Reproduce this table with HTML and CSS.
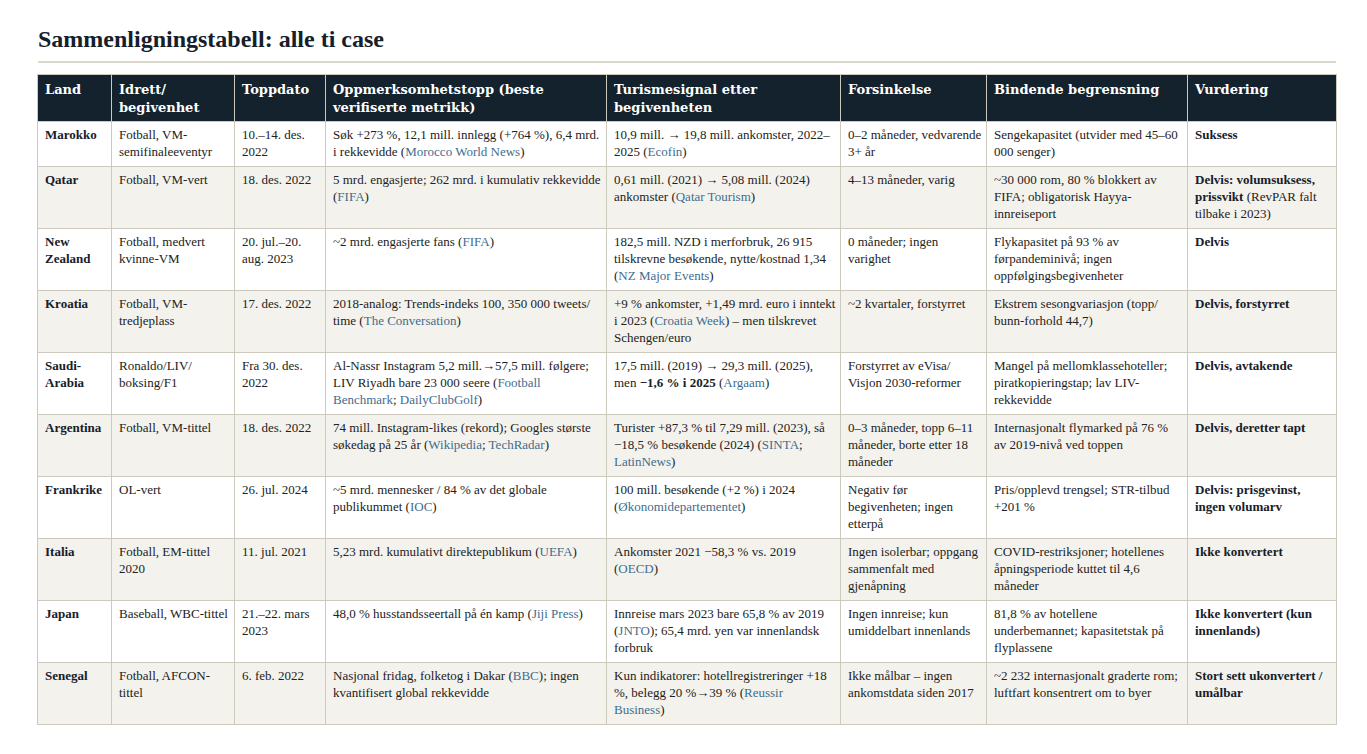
FILE: index.html
```html
<!DOCTYPE html>
<html lang="no">
<head>
<meta charset="utf-8">
<title>Sammenligningstabell</title>
<link rel="stylesheet" href="styles.css">
</head>
<body>
<main class="page">
<h1 class="title">Sammenligningstabell: alle ti case</h1>
<table class="cmp">
<colgroup>
<col class="c1"><col class="c2"><col class="c3"><col class="c4"><col class="c5"><col class="c6"><col class="c7"><col class="c8">
</colgroup>
<thead>
<tr>
<th>Land</th><th>Idrett/ begivenhet</th><th>Toppdato</th><th>Oppmerksomhetstopp (beste verifiserte metrikk)</th><th>Turismesignal etter begivenheten</th><th>Forsinkelse</th><th>Bindende begrensning</th><th>Vurdering</th>
</tr>
</thead>
<tbody>
<tr>
<td class="land">Marokko</td><td>Fotball, VM-semifinaleeventyr</td><td>10.–14. des. 2022</td>
<td>Søk +273 %, 12,1 mill. innlegg (+764 %), 6,4 mrd. i rekkevidde (<a>Morocco World News</a>)</td>
<td>10,9 mill. → 19,8 mill. ankomster, 2022–2025 (<a>Ecofin</a>)</td>
<td>0–2 måneder, vedvarende 3+ år</td>
<td>Sengekapasitet (utvider med 45–60 000 senger)</td>
<td><b>Suksess</b></td>
</tr>
<tr>
<td class="land">Qatar</td><td>Fotball, VM-vert</td><td>18. des. 2022</td>
<td>5 mrd. engasjerte; 262 mrd. i kumulativ rekkevidde (<a>FIFA</a>)</td>
<td>0,61 mill. (2021) → 5,08 mill. (2024) ankomster (<a>Qatar Tourism</a>)</td>
<td>4–13 måneder, varig</td>
<td>~30 000 rom, 80 % blokkert av FIFA; obligatorisk Hayya-innreiseport</td>
<td><b>Delvis: volumsuksess, prissvikt</b> (RevPAR falt tilbake i 2023)</td>
</tr>
<tr>
<td class="land">New Zealand</td><td>Fotball, medvert kvinne-VM</td><td>20. jul.–20. aug. 2023</td>
<td>~2 mrd. engasjerte fans (<a>FIFA</a>)</td>
<td>182,5 mill. NZD i merforbruk, 26 915 tilskrevne besøkende, nytte/kostnad 1,34 (<a>NZ Major Events</a>)</td>
<td>0 måneder; ingen varighet</td>
<td>Flykapasitet på 93 % av førpandeminivå; ingen oppfølgingsbegivenheter</td>
<td><b>Delvis</b></td>
</tr>
<tr>
<td class="land">Kroatia</td><td>Fotball, VM-tredjeplass</td><td>17. des. 2022</td>
<td>2018-analog: Trends-indeks 100, 350 000 tweets/ time (<a>The Conversation</a>)</td>
<td>+9 % ankomster, +1,49 mrd. euro i inntekt i 2023 (<a>Croatia Week</a>) – men tilskrevet Schengen/euro</td>
<td>~2 kvartaler, forstyrret</td>
<td>Ekstrem sesongvariasjon (topp/ bunn-forhold 44,7)</td>
<td><b>Delvis, forstyrret</b></td>
</tr>
<tr>
<td class="land">Saudi-Arabia</td><td>Ronaldo/LIV/ boksing/F1</td><td>Fra 30. des. 2022</td>
<td>Al-Nassr Instagram 5,2 mill.→57,5 mill. følgere; LIV Riyadh bare 23 000 seere (<a>Football Benchmark</a>; <a>DailyClubGolf</a>)</td>
<td>17,5 mill. (2019) → 29,3 mill. (2025), men <b>−1,6 % i 2025</b> (<a>Argaam</a>)</td>
<td>Forstyrret av eVisa/ Visjon 2030-reformer</td>
<td>Mangel på mellomklassehoteller; piratkopieringstap; lav LIV-rekkevidde</td>
<td><b>Delvis, avtakende</b></td>
</tr>
<tr>
<td class="land">Argentina</td><td>Fotball, VM-tittel</td><td>18. des. 2022</td>
<td>74 mill. Instagram-likes (rekord); Googles største søkedag på 25 år (<a>Wikipedia</a>; <a>TechRadar</a>)</td>
<td>Turister +87,3 % til 7,29 mill. (2023), så −18,5 % besøkende (2024) (<a>SINTA</a>; <a>LatinNews</a>)</td>
<td>0–3 måneder, topp 6–11 måneder, borte etter 18 måneder</td>
<td>Internasjonalt flymarked på 76 %<br>av 2019-nivå ved toppen</td>
<td><b>Delvis, deretter tapt</b></td>
</tr>
<tr>
<td class="land">Frankrike</td><td>OL-vert</td><td>26. jul. 2024</td>
<td>~5 mrd. mennesker / 84 % av det globale publikummet (<a>IOC</a>)</td>
<td>100 mill. besøkende (+2 %) i 2024 (<a>Økonomidepartementet</a>)</td>
<td>Negativ før begivenheten; ingen etterpå</td>
<td>Pris/opplevd trengsel; STR-tilbud +201 %</td>
<td><b>Delvis: prisgevinst, ingen volumarv</b></td>
</tr>
<tr>
<td class="land">Italia</td><td>Fotball, EM-tittel 2020</td><td>11. jul. 2021</td>
<td>5,23 mrd. kumulativt direktepublikum (<a>UEFA</a>)</td>
<td>Ankomster 2021 −58,3 % vs. 2019 (<a>OECD</a>)</td>
<td>Ingen isolerbar; oppgang sammenfalt med gjenåpning</td>
<td>COVID-restriksjoner; hotellenes åpningsperiode kuttet til 4,6 måneder</td>
<td><b>Ikke konvertert</b></td>
</tr>
<tr>
<td class="land">Japan</td><td>Baseball, WBC-tittel</td><td>21.–22. mars 2023</td>
<td>48,0 % husstandsseertall på én kamp (<a>Jiji Press</a>)</td>
<td>Innreise mars 2023 bare 65,8 % av 2019 (<a>JNTO</a>); 65,4 mrd. yen var innenlandsk forbruk</td>
<td>Ingen innreise; kun umiddelbart innenlands</td>
<td>81,8 % av hotellene underbemannet; kapasitetstak på flyplassene</td>
<td><b>Ikke konvertert (kun innenlands)</b></td>
</tr>
<tr>
<td class="land">Senegal</td><td>Fotball, AFCON-tittel</td><td>6. feb. 2022</td>
<td>Nasjonal fridag, folketog i Dakar (<a>BBC</a>); ingen kvantifisert global rekkevidde</td>
<td>Kun indikatorer: hotellregistreringer +18 %, belegg 20 %→39 % (<a>Reussir Business</a>)</td>
<td>Ikke målbar – ingen ankomstdata siden 2017</td>
<td>~2 232 internasjonalt graderte rom; luftfart konsentrert om to byer</td>
<td><b>Stort sett ukonvertert / umålbar</b></td>
</tr>
</tbody>
</table>
</main>
</body>
</html>
```

FILE: styles.css
```css
html, body {
  margin: 0;
  padding: 0;
  background: #ffffff;
}
body {
  font-family: "Liberation Serif", "Times New Roman", serif;
  color: #222222;
}
.page {
  padding: 0 0 30px 37px;
  width: 1299px;
}
.title {
  margin: 25px 0 0 1px;
  padding-bottom: 8px;
  border-bottom: 2px solid #dcd7cb;
  font-family: "Liberation Serif", serif;
  font-size: 24px;
  line-height: 28px;
  font-weight: bold;
  color: #15202a;
}
.cmp {
  margin-top: 11px;
  width: 1299px;
  border-collapse: collapse;
  table-layout: fixed;
  font-size: 13px;
  line-height: 17px;
}
.c1 { width: 74px; }
.c2 { width: 123px; }
.c3 { width: 91px; }
.c4 { width: 281px; }
.c5 { width: 234px; }
.c6 { width: 146px; }
.c7 { width: 201px; }
.c8 { width: 149px; }
.cmp th, .cmp td {
  border: 1px solid #cdc9bd;
  text-align: left;
  vertical-align: top;
}
.cmp th {
  padding: 6px 7px 4px;
  background: #14222d;
  color: #ffffff;
  font-family: "DejaVu Serif", serif;
  font-weight: bold;
  font-size: 13px;
  line-height: 18px;
}
.cmp td {
  padding: 4px 4.2px 6px 7px;
}
.cmp tbody tr:nth-child(even) td {
  background: #f4f2ed;
}
.cmp td.land {
  font-weight: bold;
  color: #15202a;
}
.cmp td b {
  color: #15202a;
}
.cmp a {
  color: #3f6d8e;
  text-decoration: none;
}
```
